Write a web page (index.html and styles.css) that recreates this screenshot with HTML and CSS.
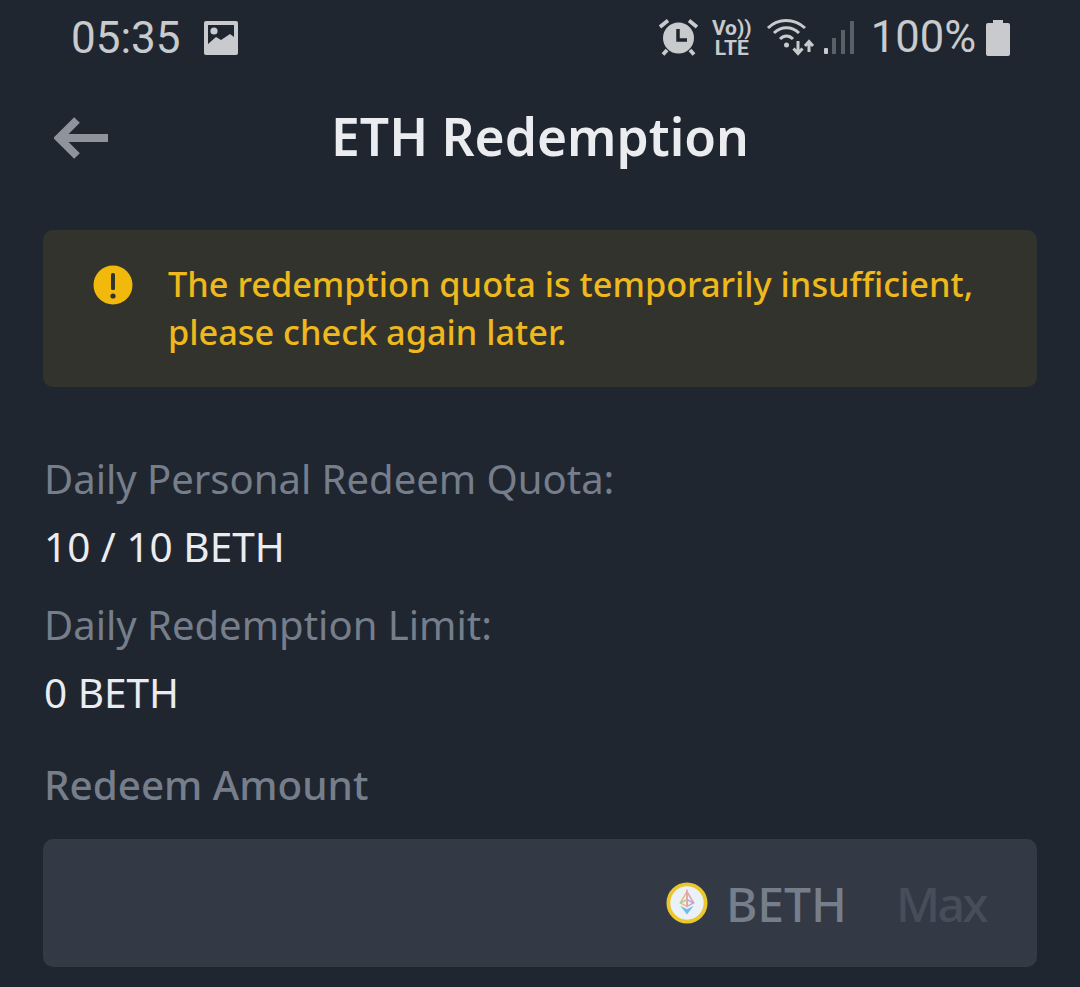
FILE: index.html
```html
<!DOCTYPE html>
<html lang="en">
	<head>
		<meta charset="UTF-8" />
		<meta name="viewport" content="width=device-width, initial-scale=1.0" />
		<title>ETH Redemption</title>
		<link rel="stylesheet" href="styles.css">
	</head>
	<body>
		<div class="status-bar">
			<div class="status-left">
				<span class="clock">05:35</span>
				<svg class="ic-image" width="36" height="36" viewBox="0 0 36 36">
					<path fill="#c8cacd" fill-rule="evenodd" d="M3 1h30a2 2 0 0 1 2 2v30a2 2 0 0 1-2 2H3a2 2 0 0 1-2-2V3a2 2 0 0 1 2-2zM5 5v19l8-7 5 3 9-6 4 3V5z"/>
					<circle cx="11" cy="11" r="3.600" fill="#c8cacd"/>
				</svg>
			</div>
			<div class="status-right">
				<svg class="ic-alarm" width="40" height="38" viewBox="0 0 40 38">
					<circle cx="19.500" cy="19" r="15.500" fill="#c8cacd"/>
					<path d="M19 10v11h9" fill="none" stroke="#1f2630" stroke-width="3.500"/>
					<path d="M1 8 9 1.500M38 8 30 1.500M8 31l-4 4.500M31 31l4 4.500" stroke="#c8cacd" stroke-width="3.800" fill="none"/>
				</svg>
				<div class="volte"><span>Vo))</span><span>LTE</span></div>
				<svg class="ic-signal" width="92" height="38" viewBox="0 0 92 38">
					<g fill="none" stroke="#c8cacd" stroke-width="3">
						<path d="M2 9C12 -1 28 -1 39 9"/>
						<path d="M8 14C15 7 26 7 33 14"/>
						<path d="M14 20C18 16 23 16 27 20"/>
						<path d="M32 22v12M27.500 29.500l4.500 5 4.500-5"/>
						<path d="M43 33V23M39 27l4-4.500 4 4.500"/>
					</g>
					<circle cx="20.500" cy="26" r="2.500" fill="#c8cacd"/>
					<rect x="58" y="29" width="4" height="6" rx="1" fill="#c8cacd"/>
					<rect x="66" y="19" width="4" height="16" fill="#5a6068"/>
					<rect x="75" y="11" width="4" height="24" fill="#5a6068"/>
					<rect x="84" y="2" width="4" height="33" fill="#5a6068"/>
				</svg>
				<span class="battery-pct">100%</span>
				<svg class="ic-battery" width="24" height="36" viewBox="0 0 24 36">
					<path fill="#c8cacd" d="M7 0h10v3h5a2 2 0 0 1 2 2v29a2 2 0 0 1-2 2H2a2 2 0 0 1-2-2V5a2 2 0 0 1 2-2h5z"/>
				</svg>
			</div>
		</div>

		<div class="header">
			<svg class="back" width="56" height="44" viewBox="0 0 56 44">
				<path d="M54 22H6M23 4 5 22l18 18" fill="none" stroke="#8f949c" stroke-width="8"/>
			</svg>
			<h1>ETH Redemption</h1>
		</div>

		<div class="content">
			<div class="alert">
				<svg class="alert-icon" width="40" height="40" viewBox="0 0 40 40">
					<circle cx="20" cy="20" r="19.500" fill="#f0b90b"/>
					<rect x="18" y="8" width="4" height="17" rx="1.500" fill="#33332e"/>
					<circle cx="20" cy="31" r="2.600" fill="#33332e"/>
				</svg>
				<p>The redemption quota is temporarily insufficient, please check again later.</p>
			</div>

			<div class="info">
				<div class="info-label">Daily Personal Redeem Quota:</div>
				<div class="info-value">10 / 10 BETH</div>
				<div class="info-label">Daily Redemption Limit:</div>
				<div class="info-value">0 BETH</div>
			</div>

			<div class="field-label">Redeem Amount</div>
			<div class="amount-box">
				<svg class="coin" width="42" height="42" viewBox="0 0 44 44">
					<circle cx="22" cy="22" r="19.500" fill="#eaf1f7" stroke="#ebc62f" stroke-width="4"/>
					<g fill="none" stroke-width="1.600">
						<path d="M22 10l-7 12 7 3.500z" stroke="#eeb77e"/>
						<path d="M22 10l7 12-7 3.500z" stroke="#e5a0ad"/>
						<path d="M15 22l7-3.500" stroke="#9fd59a"/>
						<path d="M29 22l-7-3.500" stroke="#b9a5dc"/>
					</g>
					<path d="M15 25l7 3.500 7-3.500-7 9z" fill="#6dbce9"/>
				</svg>
				<span class="coin-name">BETH</span>
				<span class="max">Max</span>
			</div>
		</div>
	</body>
</html>
```

FILE: styles.css
```css
:root {
	--main-bg: #1f2630;
	--box-bg: #333a45;
	--alert-bg: #33332e;
	--yellow: #edb91c;
	--gray: #767e8b;
	--white: #eaecef;
	--status: #c8cacd;
}

* {
	box-sizing: border-box;
}

html,
body {
	height: 987px;
	overflow: hidden;
}

body {
	margin: 0;
	background-color: var(--main-bg);
	color: var(--white);
	font-family: 'Noto Sans', sans-serif;
}

.status-bar {
	display: flex;
	justify-content: space-between;
	align-items: center;
	height: 75px;
	padding: 0 70px 0 71px;
	color: var(--status);
	font-family: Roboto, sans-serif;
	font-size: 44px;
}

.status-left,
.status-right {
	display: flex;
	align-items: center;
}

.ic-image {
	margin-left: 22px;
}

.ic-alarm {
	margin-right: 16px;
}

.volte {
	display: flex;
	flex-direction: column;
	align-items: center;
	width: 34px;
	margin-right: 17px;
	font-size: 21px;
	font-weight: 700;
	line-height: 20px;
}

.ic-signal {
	margin-right: 13px;
}

.battery-pct {
	font-size: 43.500px;
}

.ic-battery {
	margin-left: 10px;
}

.header {
	position: relative;
	display: flex;
	justify-content: center;
	align-items: center;
	height: 126px;
}

.back {
	position: absolute;
	left: 54px;
	top: 41px;
}

h1 {
	margin: -3px 0 0;
	font-size: 51.500px;
	font-weight: 600;
	line-height: 123px;
}

.content {
	padding: 29px 43px 0 44px;
}

.alert {
	display: flex;
	align-items: flex-start;
	height: 157px;
	margin-left: -1px;
	padding: 30px 50px 0;
	background-color: var(--alert-bg);
	border-radius: 10px;
}

.alert-icon {
	flex-shrink: 0;
	margin-right: 35px;
	margin-top: 5px;
}

.alert p {
	margin: 0;
	color: var(--yellow);
	font-size: 34.300px;
	font-weight: 500;
	line-height: 48px;
}

.info {
	margin-top: 67px;
	font-size: 40px;
}

.info-label {
	height: 50px;
	line-height: 50px;
	color: var(--gray);
}

.info-value {
	height: 96px;
	padding-top: 18px;
	line-height: 50px;
	font-size: 40.500px;
}

.field-label {
	margin-top: 14px;
	height: 79px;
	color: var(--gray);
	font-size: 40.400px;
	font-weight: 500;
	line-height: 50px;
}

.amount-box {
	display: flex;
	align-items: center;
	justify-content: flex-end;
	height: 128px;
	margin-left: -1px;
	padding-right: 51px;
	background-color: var(--box-bg);
	border-radius: 10px;
	font-size: 48px;
}

.coin-name {
	margin-left: 18px;
	color: var(--gray);
	font-weight: 500;
}

.max {
	margin-left: 49px;
	color: #474e5a;
	font-weight: 500;
	letter-spacing: -2.500px;
}
```
